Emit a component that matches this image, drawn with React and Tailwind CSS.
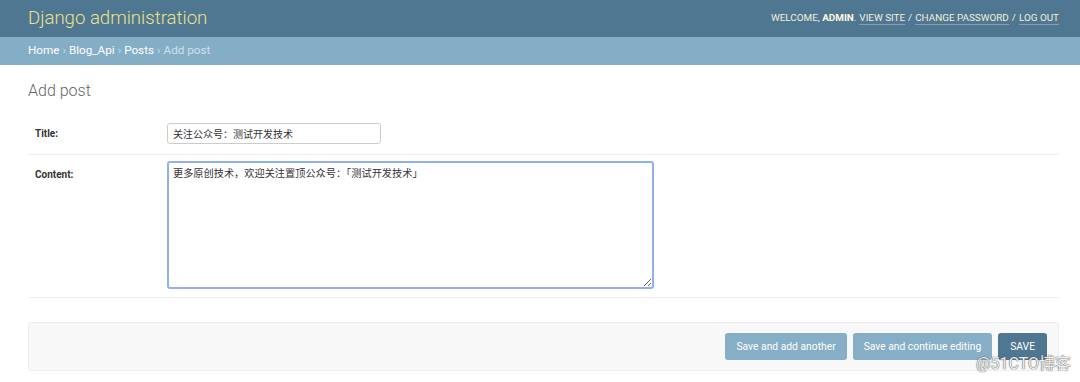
import React, { useState } from "react";

const cjk = "font-['Roboto','Noto_Sans_CJK_SC',sans-serif]";

const App = () => {
  const [title, setTitle] = useState("关注公众号：测试开发技术");
  const [content, setContent] = useState("更多原创技术，欢迎关注置顶公众号：「测试开发技术」");

  return (
    <div className={`relative min-h-[382px] bg-white text-[#333] ${cjk}`}>
      {/* header */}
      <div className="h-[37px] bg-[#4f7791] flex items-center justify-between pl-[28px] pr-[21px]">
        <div className="text-[18.6px] font-light text-[#ece38a] leading-none">Django administration</div>
        <div className="text-[9.9px] text-[#f2f0d8] flex items-center gap-[3px]">
          <span>
            WELCOME, <strong className="font-bold text-[#fffbe0]">ADMIN</strong>.
          </span>
          <a className="border-b border-white/30 leading-[13px]">VIEW SITE</a>
          <span>/</span>
          <a className="border-b border-white/30 leading-[13px]">CHANGE PASSWORD</a>
          <span>/</span>
          <a className="border-b border-white/30 leading-[13px]">LOG OUT</a>
        </div>
      </div>

      {/* breadcrumbs */}
      <div className="h-[28px] bg-[#84aec6] flex items-center pl-[28px] text-[11.7px] text-white gap-[3px]">
        <a>Home</a>
        <span className="text-[#c7dce8]">›</span>
        <a>Blog_Api</a>
        <span className="text-[#c7dce8]">›</span>
        <a>Posts</a>
        <span className="text-[#c7dce8]">›</span>
        <span className="text-[#cfe0ea]">Add post</span>
      </div>

      {/* content */}
      <div className="pl-[28px] pr-[21px] pt-[16px]">
        <h1 className="text-[16px] font-light text-[#666] leading-[20px]">Add post</h1>

        <div className="mt-[11px]">
          <div className="flex items-center border-b border-[#eee] px-[7px] h-[43px]">
            <label className="w-[132px] text-[10px] font-bold text-[#333]">Title:</label>
            <input
              value={title}
              onChange={(e) => setTitle(e.target.value)}
              className="w-[214px] h-[21px] border border-[#ccc] rounded-[3px] px-[5px] text-[10px] text-[#333] outline-none"
            />
          </div>
          <div className="flex items-start border-b border-[#eee] px-[7px] pt-[6px] pb-[8px]">
            <label className="w-[132px] pt-[6px] text-[10px] font-bold text-[#333]">Content:</label>
            <textarea
              value={content}
              onChange={(e) => setContent(e.target.value)}
              className="w-[487px] h-[128px] border-2 border-[#8fb2ec] rounded-[3px] px-[4px] py-[3px] text-[10.2px] text-[#333] outline-none resize"
            />
          </div>
        </div>

        {/* submit row */}
        <div className="mt-[24px] h-[49px] bg-[#f8f8f8] border border-[#eee] rounded-[3px] flex items-center justify-end gap-[6px] pr-[11px]">
          <button className="h-[27px] px-[11px] rounded-[3px] bg-[#86aec6] text-white text-[10.3px]">
            Save and add another
          </button>
          <button className="h-[27px] px-[11px] rounded-[3px] bg-[#86aec6] text-white text-[10.3px]">
            Save and continue editing
          </button>
          <button className="h-[27px] px-[12px] rounded-[3px] bg-[#4f7791] text-white text-[10.3px]">
            SAVE
          </button>
        </div>
      </div>

      {/* watermark */}
      <div className="absolute right-[9px] bottom-[10px] text-[16px] text-white/90 [text-shadow:0_0_1px_#555,0_0_1px_#555] leading-none">
        @51CTO博客
      </div>
    </div>
  );
};

export default App;
